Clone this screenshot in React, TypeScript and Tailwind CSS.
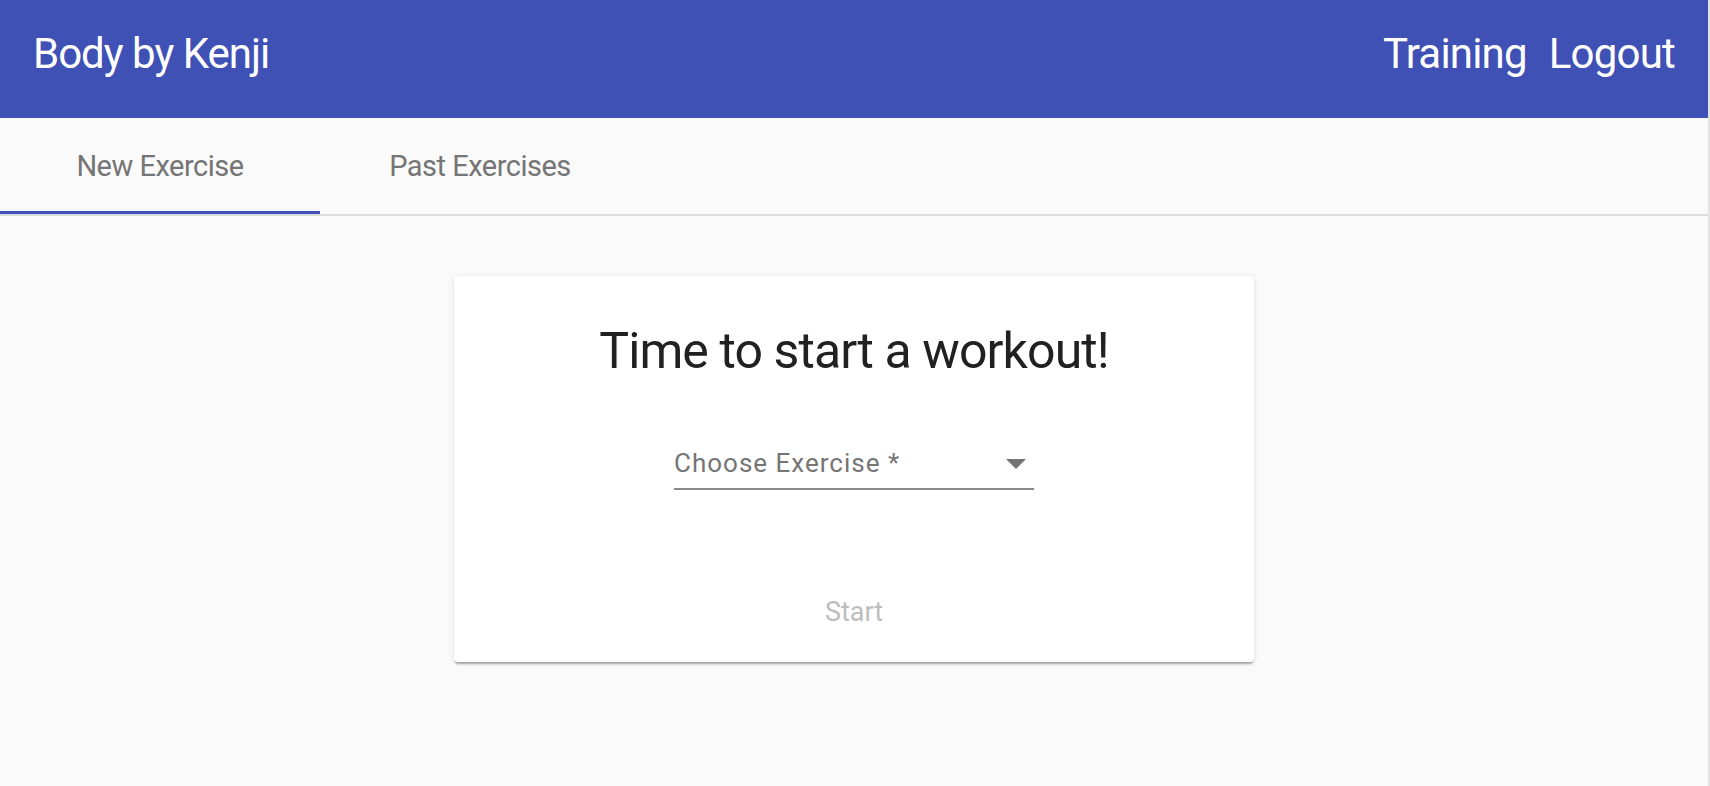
import React from 'react';

const tabs = ['New Exercise', 'Past Exercises'];

export default function App() {
  return (
    <div className="flex h-[786px] w-full bg-[#fafafa] font-['Roboto',sans-serif]">
      <div className="flex w-[1708px] flex-col">
        {/* toolbar */}
        <header className="flex h-[118px] items-start justify-between bg-[#3f51b5] px-[33px] pt-[29px] text-white">
          <span className="text-[42px] leading-[49px] tracking-[-1px]">Body by Kenji</span>
          <nav className="flex gap-[22px] text-[42px] leading-[49px] tracking-[-0.8px]">
            <a>Training</a>
            <a>Logout</a>
          </nav>
        </header>

        {/* tab header */}
        <div className="flex border-b-2 border-[#dcdcdc]">
          {tabs.map((tab, i) => (
            <div key={tab} className="relative flex h-[96px] w-[320px] items-center justify-center">
              <span className="text-[29px] leading-[34px] tracking-[-0.5px] text-[#757575]">{tab}</span>
              {i === 0 && <div className="absolute bottom-0 left-0 h-[3px] w-full bg-[#3f51b5]" />}
            </div>
          ))}
        </div>

        {/* new training card */}
        <div className="mt-[60px] flex justify-center">
          <div className="flex h-[386px] w-[800px] flex-col items-center rounded-[4px] bg-white pt-[46px] shadow-[0_3px_2px_-1px_rgba(0,0,0,0.3),0_1px_6px_0_rgba(0,0,0,0.1)]">
            <h1 className="text-[50px] leading-[59px] tracking-[-0.9px] text-[#212121]">Time to start a workout!</h1>

            <div className="mt-[68px] flex w-[360px] items-center justify-between border-b-2 border-[#8a8a8a] pb-[10px]">
              <span className="text-[26px] leading-[29px] tracking-[1px] text-[#757575]">Choose Exercise *</span>
              <svg width="20" height="10" viewBox="0 0 20 10" className="mr-[8px]">
                <path d="M0 0 L20 0 L10 10 Z" fill="#757575" />
              </svg>
            </div>

            <button className="mt-[106px] text-[27px] leading-[32px] text-[#bdbdbd]">Start</button>
          </div>
        </div>
      </div>
      <div className="w-[2px] bg-[#e2e2e2]" />
    </div>
  );
}
